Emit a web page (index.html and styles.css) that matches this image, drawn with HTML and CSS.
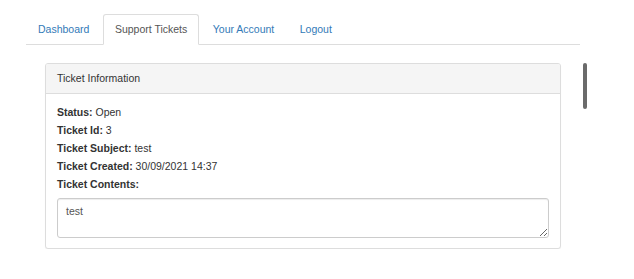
FILE: index.html
```html
<!DOCTYPE html>
<html lang="en">
<head>
    <meta charset="UTF-8">
    <meta name="viewport" content="width=device-width, initial-scale=1.0">
    <title>Support Tickets</title>
    <link rel="stylesheet" href="styles.css">
</head>
<body>
    <div class="container">
        <!-- Top tabs -->
        <ul class="nav-tabs">
            <li><a href="#">Dashboard</a></li>
            <li class="active"><a href="#">Support Tickets</a></li>
            <li><a href="#">Your Account</a></li>
            <li><a href="#">Logout</a></li>
        </ul>

        <div class="content">
            <!-- Ticket panel -->
            <div class="panel">
                <div class="panel-heading">Ticket Information</div>
                <div class="panel-body">
                    <p><b>Status:</b> Open</p>
                    <p><b>Ticket Id:</b> 3</p>
                    <p><b>Ticket Subject:</b> test</p>
                    <p><b>Ticket Created:</b> 30/09/2021 14:37</p>
                    <p><b>Ticket Contents:</b></p>
                    <textarea class="contents" readonly>test</textarea>
                </div>
            </div>
        </div>
    </div>

    <div class="scroll-thumb"></div>
</body>
</html>
```

FILE: styles.css
```css
/* Basic page styling */
body {
    margin: 0;
    font-family: "Liberation Sans", Arial, sans-serif;
    font-size: 10.5px;
    line-height: 15px;
    color: #333;
    background-color: #fff;
}

.container {
    width: 554px;
    margin-left: 26px;
    padding-top: 14px;
}

/* Tabs */
.nav-tabs {
    display: flex;
    list-style: none;
    margin: 0;
    padding: 0;
    border-bottom: 1px solid #ddd;
}

.nav-tabs li {
    margin-bottom: -1px;
    margin-right: 1.5px;
}

.nav-tabs a {
    display: block;
    padding: 7px 11px;
    color: #337ab7;
    text-decoration: none;
    border: 1px solid transparent;
    border-radius: 3px 3px 0 0;
}

.nav-tabs li.active a {
    color: #555;
    background-color: #fff;
    border-color: #ddd;
    border-bottom-color: transparent;
}

/* Panel */
.content {
    padding: 18px 19px 0;
}

.panel {
    border: 1px solid #ddd;
    border-radius: 3px;
    background-color: #fff;
    box-shadow: 0 1px 1px rgba(0, 0, 0, 0.05);
}

.panel-heading {
    padding: 7px 11px;
    background-color: #f5f5f5;
    border-bottom: 1px solid #ddd;
    border-radius: 2px 2px 0 0;
}

.panel-body {
    padding: 11px 11px 10px;
}

.panel-body p {
    margin: 0 0 3px;
}

.contents {
    display: block;
    box-sizing: border-box;
    width: 100%;
    height: 40px;
    margin-top: 6px;
    padding: 5px 8px;
    font-family: inherit;
    font-size: 10.5px;
    line-height: 15px;
    color: #555;
    border: 1px solid #ccc;
    border-radius: 3px;
    box-shadow: inset 0 1px 1px rgba(0, 0, 0, 0.075);
    resize: vertical;
    outline: none;
}

/* Overlay scrollbar */
.scroll-thumb {
    position: fixed;
    top: 63px;
    left: 583px;
    width: 4px;
    height: 46px;
    border-radius: 2px;
    background-color: #6b6b6b;
}
```
